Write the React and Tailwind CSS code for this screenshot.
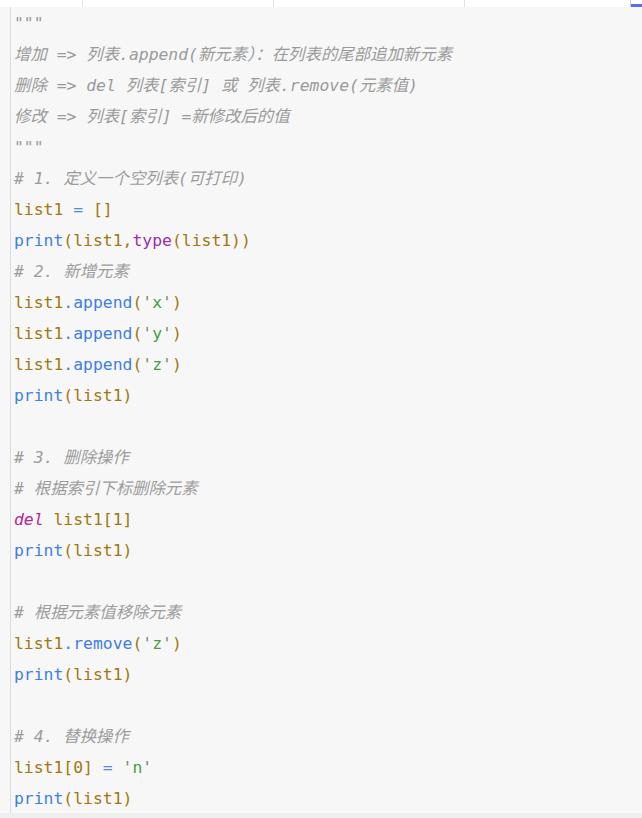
import React from 'react';

// token colours, picked from the editor theme
const C = {
  doc: 'text-[#9a9a9a] italic',
  cmt: 'text-[#9c9c9c] italic',
  v: 'text-[#a0770f]',
  fn: 'text-[#3f7ee4]',
  op: 'text-[#5a86d8]',
  ty: 'text-[#9a2fae]',
  kw: 'text-[#b3269a] italic',
  str: 'text-[#449c44]',
  q: 'text-[#7d8a6a]',
};

const lines = [
  [['doc', '"""']],
  [['doc', '增加 => 列表.append(新元素）：在列表的尾部追加新元素']],
  [['doc', '删除 => del 列表[索引] 或 列表.remove(元素值)']],
  [['doc', '修改 => 列表[索引] =新修改后的值']],
  [['doc', '"""']],
  [['cmt', '# 1. 定义一个空列表(可打印)']],
  [['v', 'list1 '], ['op', '='], ['v', ' []']],
  [['fn', 'print'], ['v', '(list1,'], ['ty', 'type'], ['v', '(list1))']],
  [['cmt', '# 2. 新增元素']],
  [['v', 'list1'], ['fn', '.append'], ['v', '('], ['q', "'"], ['str', 'x'], ['q', "'"], ['v', ')']],
  [['v', 'list1'], ['fn', '.append'], ['v', '('], ['q', "'"], ['str', 'y'], ['q', "'"], ['v', ')']],
  [['v', 'list1'], ['fn', '.append'], ['v', '('], ['q', "'"], ['str', 'z'], ['q', "'"], ['v', ')']],
  [['fn', 'print'], ['v', '(list1)']],
  [],
  [['cmt', '# 3. 删除操作']],
  [['cmt', '# 根据索引下标删除元素']],
  [['kw', 'del'], ['v', ' list1[1]']],
  [['fn', 'print'], ['v', '(list1)']],
  [],
  [['cmt', '# 根据元素值移除元素']],
  [['v', 'list1'], ['fn', '.remove'], ['v', '('], ['q', "'"], ['str', 'z'], ['q', "'"], ['v', ')']],
  [['fn', 'print'], ['v', '(list1)']],
  [],
  [['cmt', '# 4. 替换操作']],
  [['v', 'list1[0] '], ['op', '='], ['q', " '"], ['str', 'n'], ['q', "'"]],
  [['fn', 'print'], ['v', '(list1)']],
];

export default function App() {
  return (
    <div className="h-[818px] w-[642px] overflow-hidden bg-[#f7f7f7] flex flex-col">
      {/* tab strip */}
      <div className="h-[7px] bg-white flex shrink-0">
        <div className="w-[83px] border-r border-[#e2e2e2]" />
        <div className="w-[191px] border-r border-[#e2e2e2]" />
        <div className="w-[191px] border-r border-[#e2e2e2]" />
        <div className="w-[166px] border-r border-[#d0d0d0]" />
        <div className="flex-1 flex flex-col justify-end">
          <div className="h-[3px] bg-[#5b6ee3]" />
        </div>
      </div>

      <div className="flex-1 flex min-h-0">
        <div className="w-[11px] shrink-0 border-r border-[#dcdcdc]" />
        <div
          className="flex-1 pl-[3px] pt-[1px] text-[16.4px] leading-[31px] whitespace-pre"
          style={{ fontFamily: '"DejaVu Sans Mono", "Noto Sans CJK SC", monospace' }}
        >
          {lines.map((toks, i) => (
            <div key={i} className="h-[31px]">
              {toks.map(([k, t], j) => (
                <span key={j} className={C[k]}>{t}</span>
              ))}
            </div>
          ))}
        </div>
      </div>

      <div className="h-[5px] bg-[#efefef] shrink-0" />
    </div>
  );
}
